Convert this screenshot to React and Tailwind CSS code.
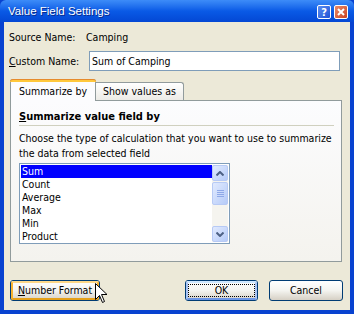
import React from "react";

const items = ["Sum", "Count", "Average", "Max", "Min", "Product"];

const XpButton = ({ children, className = "", variant = "plain" }) => {
  // variant: plain | hover | default
  const inner =
    variant === "hover"
      ? "border-2 border-[#F8B330] border-t-[#FDD889] border-b-[#E5A01A]"
      : variant === "default"
      ? "border-2 border-[#A9C3F3] border-t-[#CEE7FF] border-b-[#6E97E6]"
      : "border-2 border-transparent";
  return (
    <div
      className={`h-[21px] rounded-[3px] border border-[#003C74] bg-gradient-to-b from-[#FFFFFF] via-[#F4F4F0] to-[#D6D0C5] ${className}`}
    >
      <div className={`h-full w-full rounded-[2px] ${inner} flex items-center justify-center`}>
        {variant === "default" ? (
          <div className="h-[13px] w-full border border-dotted border-black flex items-center justify-center">
            {children}
          </div>
        ) : (
          children
        )}
      </div>
    </div>
  );
};

const ScrollBtn = ({ up }) => (
  <div className="h-[16px] w-[16px] rounded-[2px] border border-[#B7CAF5] bg-gradient-to-br from-[#E1EAFE] to-[#B6CBF8] flex items-center justify-center">
    <svg width="8" height="5" viewBox="0 0 8 5">
      <path
        d={up ? "M0.5 4.5 L4 1 L7.5 4.5" : "M0.5 0.5 L4 4 L7.5 0.5"}
        fill="none"
        stroke="#4D6185"
        strokeWidth="2"
      />
    </svg>
  </div>
);

export default function App() {
  return (
    <div className="relative w-[354px] h-[314px] bg-[#0842D0] flex flex-col font-['DejaVu_Sans_Condensed','DejaVu_Sans',sans-serif] text-[10.5px] text-black leading-[13px] overflow-hidden select-none">
      {/* title bar */}
      <div className="h-[22px] shrink-0 flex items-center bg-gradient-to-b from-[#3D8CF8] via-[#0A5AE6] to-[#0447D4] rounded-t-[6px]">
        <span className="ml-[8px] font-['Liberation_Sans',Arial,sans-serif] text-[11.5px] text-white [text-shadow:1px_1px_0_#0A2A8A]">
          Value Field Settings
        </span>
        <div className="ml-auto mr-[6px] flex gap-[3px] mt-[2px]">
          <div className="w-[14px] h-[14px] rounded-[2px] border border-white bg-gradient-to-br from-[#5B8DF0] to-[#1F50D6] flex items-center justify-center text-white text-[11px] font-bold leading-none">
            ?
          </div>
          <div className="w-[14px] h-[14px] rounded-[2px] border border-white bg-gradient-to-br from-[#EA8A68] to-[#C94120] flex items-center justify-center">
            <svg width="8" height="8" viewBox="0 0 8 8">
              <path d="M1 1 L7 7 M7 1 L1 7" stroke="white" strokeWidth="2" />
            </svg>
          </div>
        </div>
      </div>

      {/* body */}
      <div className="flex-1 mx-[4px] mb-[4px] bg-[#ECE9D8] flex flex-col pl-[5px]">
        <div className="mt-[9px] h-[13px] flex items-center">
          <span className="w-[77px]">Source Name:</span>
          <span>Camping</span>
        </div>

        <div className="mt-[7px] h-[20px] flex items-center">
          <span className="w-[80px]">
            <span className="underline">C</span>ustom Name:
          </span>
          <div className="w-[251px] h-[20px] border border-[#7F9DB9] bg-white flex items-center pl-[2px]">
            Sum of Camping
          </div>
        </div>

        {/* tabs */}
        <div className="mt-[8px] ml-[1px] flex items-end h-[21px] relative z-10">
          <div className="w-[86px] h-[22px] mb-[-1px] bg-[#FCFCFE] border border-[#919B9C] border-b-0 rounded-t-[3px] relative flex items-center justify-center pt-[2px]">
            <div className="absolute -top-px -left-px -right-px h-[3px] rounded-t-[3px] bg-[#FFC83C] border-t border-[#E68B2C]" />
            Summarize by
          </div>
          <div className="w-[88px] h-[18px] bg-gradient-to-b from-[#FFFFFF] to-[#ECEBE6] border border-[#919B9C] border-b-0 border-l-0 rounded-tr-[3px] flex items-center justify-center">
            Show values as
          </div>
        </div>

        {/* panel */}
        <div className="ml-[1px] w-[332px] h-[162px] border border-[#919B9C] bg-gradient-to-b from-[#FCFCFE] to-[#F4F3EE] pl-[8px] pr-[7px] flex flex-col">
          <div className="mt-[9px] font-bold text-[11px] h-[13px] flex items-center">
            <span className="underline">S</span>ummarize value field by
          </div>
          <div className="mt-[2px] h-px bg-[#D0D0BF]" />
          <div className="mt-[5px] leading-[15px] whitespace-nowrap">
            Choose the type of calculation that you want to use to summarize
            <br />
            the data from selected field
          </div>
          <div className="mt-[2px] w-[211px] h-[81px] border border-[#7F9DB9] bg-white flex p-px">
            <div className="flex-1 flex flex-col">
              {items.map((it, i) => (
                <div
                  key={it}
                  className={`h-[13px] pl-[1px] flex items-center ${
                    i === 0 ? "bg-[#0000FF] text-white" : ""
                  }`}
                >
                  {it}
                </div>
              ))}
            </div>
            <div className="w-[16px] flex flex-col bg-[#F5F4EF]">
              <ScrollBtn up />
              <div className="mt-px h-[23px] rounded-[2px] border border-[#B7CAF5] bg-gradient-to-br from-[#E1EAFE] to-[#B6CBF8] flex flex-col items-center justify-center gap-[1px]">
                {[0, 1, 2, 3].map((k) => (
                  <div key={k} className="w-[7px] h-px bg-[#8EA8E8]" />
                ))}
              </div>
              <div className="flex-1" />
              <ScrollBtn />
            </div>
          </div>
        </div>

        {/* buttons */}
        <div className="mt-[18px] flex items-center">
          <XpButton className="ml-[1px] w-[90px]" variant="hover">
            <span>
              <span className="underline">N</span>umber Format
            </span>
          </XpButton>
          <XpButton className="ml-[85px] w-[73px]" variant="default">
            OK
          </XpButton>
          <XpButton className="ml-[11px] w-[74px]">Cancel</XpButton>
        </div>
      </div>

      {/* mouse cursor */}
      <svg
        className="absolute left-[95px] top-[283px]"
        width="13"
        height="21"
        viewBox="0 0 13 21"
      >
        <path
          d="M0.5 0.5 L0.5 16.5 L4.5 12.5 L7.5 19.5 L9.5 18.5 L6.5 11.5 L12 11.5 Z"
          fill="white"
          stroke="black"
          strokeWidth="1"
        />
      </svg>
    </div>
  );
}
